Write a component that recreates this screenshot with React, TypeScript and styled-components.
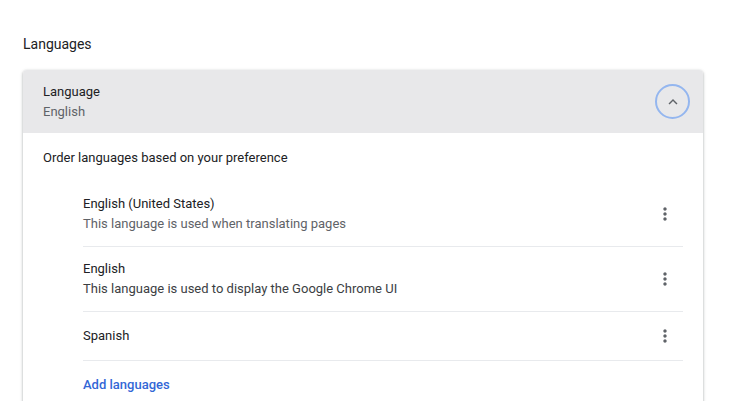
import React from "react";
import styled, { createGlobalStyle } from "styled-components";

const Global = createGlobalStyle`
  html, body { margin: 0; padding: 0; background: #fff; }
  body { font-family: Roboto, "Noto Sans", "Liberation Sans", sans-serif; font-size: 13px; color: #202124; }
  * { box-sizing: border-box; }
`;

const Page = styled.div`
  padding: 34px 29px 0 23px;
  height: 401px;
  overflow: hidden;
`;

const Heading = styled.h2`
  margin: 0 0 16px;
  font-size: 14px;
  font-weight: 400;
  line-height: 20px;
  color: #202124;
`;

const Card = styled.section`
  border-radius: 4px 4px 0 0;
  background: #fff;
  box-shadow: 0 1px 2px rgba(60, 64, 67, 0.3), 0 1px 3px 1px rgba(60, 64, 67, 0.15);
  overflow: hidden;
`;

const Header = styled.div`
  display: flex;
  align-items: center;
  height: 63px;
  padding: 0 13px 0 20px;
  background: #e8e8ea;
`;

const HeaderText = styled.div`
  flex: 1;
  display: flex;
  flex-direction: column;
`;

const Primary = styled.div`
  line-height: 20px;
  color: #202124;
`;

const Secondary = styled.div<{ $strong?: boolean }>`
  line-height: 20px;
  color: ${(p) => (p.$strong ? "#3c4043" : "#5f6368")};
`;

const CircleButton = styled.button`
  width: 35px;
  height: 35px;
  border-radius: 50%;
  border: 2px solid #94b6ef;
  background: transparent;
  padding: 0;
  display: flex;
  align-items: center;
  justify-content: center;
  color: #5f6368;
`;

const Body = styled.div`
  padding: 15px 20px 0 20px;
`;

const Intro = styled.div`
  line-height: 20px;
  color: #202124;
  margin-bottom: 14px;
`;

const List = styled.div`
  margin-left: 40px;
`;

const Row = styled.div<{ $twoLine?: boolean }>`
  display: flex;
  align-items: center;
  min-height: 49px;
  padding: ${(p) => (p.$twoLine ? "12px 0" : "0")};
  border-bottom: 1px solid #e8eaed;
`;

const RowText = styled.div`
  flex: 1;
  display: flex;
  flex-direction: column;
`;

const IconButton = styled.button`
  width: 36px;
  height: 36px;
  margin: -8px 0;
  border: none;
  background: transparent;
  padding: 0;
  display: flex;
  align-items: center;
  justify-content: center;
  color: #5f6368;
`;

const AddRow = styled.div`
  padding: 14px 0 20px;
  line-height: 20px;
`;

const Link = styled.a`
  color: #3367d6;
  font-weight: 500;
  text-decoration: none;
`;

const MoreVert = () => (
  <svg width="20" height="20" viewBox="0 0 24 24" fill="currentColor">
    <path d="M12 8c1.1 0 2-.9 2-2s-.9-2-2-2-2 .9-2 2 .9 2 2 2zm0 2c-1.1 0-2 .9-2 2s.9 2 2 2 2-.9 2-2-.9-2-2-2zm0 6c-1.1 0-2 .9-2 2s.9 2 2 2 2-.9 2-2-.9-2-2-2z" />
  </svg>
);

const ExpandLess = () => (
  <svg width="18" height="18" viewBox="0 0 24 24" fill="currentColor">
    <path d="M12 8l-6 6 1.41 1.41L12 10.83l4.59 4.58L18 14z" />
  </svg>
);

const languages = [
  { name: "English (United States)", note: "This language is used when translating pages" },
  { name: "English", note: "This language is used to display the Google Chrome UI", strong: true },
  { name: "Spanish" },
];

export default function App() {
  return (
    <>
      <Global />
      <Page>
        <Heading>Languages</Heading>
        <Card>
          <Header>
            <HeaderText>
              <Primary>Language</Primary>
              <Secondary>English</Secondary>
            </HeaderText>
            <CircleButton aria-label="Collapse">
              <ExpandLess />
            </CircleButton>
          </Header>
          <Body>
            <Intro>Order languages based on your preference</Intro>
            <List>
              {languages.map((l) => (
                <Row key={l.name} $twoLine={!!l.note}>
                  <RowText>
                    <Primary>{l.name}</Primary>
                    {l.note && <Secondary $strong={l.strong}>{l.note}</Secondary>}
                  </RowText>
                  <IconButton aria-label="More actions">
                    <MoreVert />
                  </IconButton>
                </Row>
              ))}
              <AddRow>
                <Link href="#">Add languages</Link>
              </AddRow>
            </List>
          </Body>
        </Card>
      </Page>
    </>
  );
}
